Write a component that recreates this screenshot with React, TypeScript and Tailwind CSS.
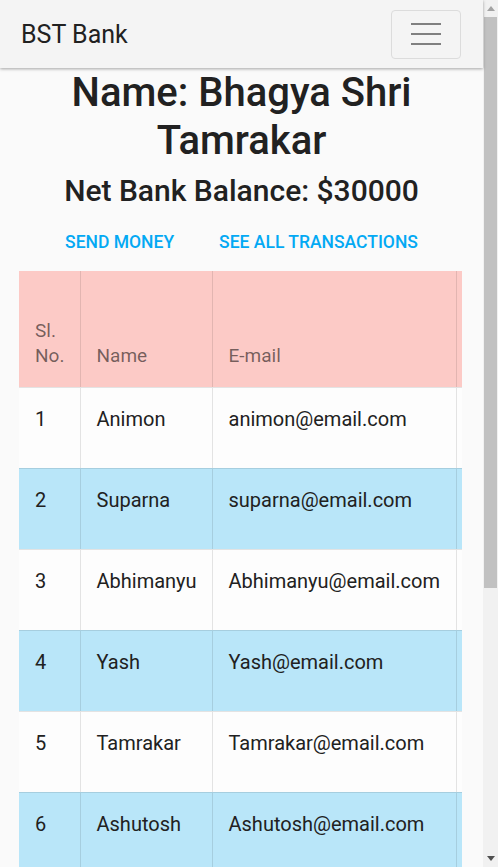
import React from 'react';

interface Customer {
  id: number;
  name: string;
  email: string;
  balance: number;
}

const customers: Customer[] = [
  { id: 1, name: "Animon", email: "animon@email.com", balance: 25000 },
  { id: 2, name: "Suparna", email: "suparna@email.com", balance: 18000 },
  { id: 3, name: "Abhimanyu", email: "Abhimanyu@email.com", balance: 42000 },
  { id: 4, name: "Yash", email: "Yash@email.com", balance: 15000 },
  { id: 5, name: "Tamrakar", email: "Tamrakar@email.com", balance: 27000 },
  { id: 6, name: "Ashutosh", email: "Ashutosh@email.com", balance: 33000 },
  { id: 7, name: "Rohit", email: "Rohit@email.com", balance: 21000 },
  { id: 8, name: "Priya", email: "Priya@email.com", balance: 12000 },
  { id: 9, name: "Karan", email: "Karan@email.com", balance: 38000 },
  { id: 10, name: "Neha", email: "Neha@email.com", balance: 29000 },
];

const App: React.FC = () => {
  return (
    <div className="h-screen flex overflow-hidden bg-[#fafafa] text-[#212121] font-['Roboto',sans-serif]">
      <div className="flex-1 min-w-0">
        {/* Navbar */}
        <nav className="h-[68px] bg-[#f4f4f4] shadow-[0_1px_3px_rgba(0,0,0,0.35)] flex items-center justify-between pl-[21px] pr-[22px] relative z-10">
          <span className="text-[25px] leading-none">BST Bank</span>
          <button className="w-[70px] h-[49px] border border-[#dcdcdc] rounded-[4px] flex flex-col items-center justify-center gap-[8px]">
            <span className="block w-[30px] h-[2px] bg-[#808080]" />
            <span className="block w-[30px] h-[2px] bg-[#808080]" />
            <span className="block w-[30px] h-[2px] bg-[#808080]" />
          </button>
        </nav>

        {/* Account summary */}
        <div className="text-center">
          <h1 className="text-[40px] leading-[48px] font-medium px-[40px] pt-px">Name: Bhagya Shri Tamrakar</h1>
          <h2 className="text-[30px] leading-[34px] font-medium mt-[9px]">Net Bank Balance: $30000</h2>
          <div className="flex justify-center gap-[45px] mt-[24px] text-[17.5px] font-medium text-[#03a9f4] uppercase leading-[20px]">
            <a href="#">Send Money</a>
            <a href="#">See all transactions</a>
          </div>
        </div>

        {/* Customers */}
        <div className="ml-[19px] mr-[21px] mt-[19px] mb-[36px] overflow-x-auto">
          <table className="border-collapse text-[20px] w-[660px] table-fixed">
            <colgroup>
              <col className="w-[61px]" />
              <col className="w-[132px]" />
              <col className="w-[244px]" />
              <col className="w-[223px]" />
            </colgroup>
            <thead>
              <tr className="bg-[#fccac6] text-black/55 text-[19px] h-[116px]">
                <th className="align-bottom text-left font-normal px-[16px] pb-[19px] leading-[25px] border-r border-black/10">Sl. No.</th>
                <th className="align-bottom text-left font-normal px-[16px] pb-[19px] leading-[25px] border-r border-black/10">Name</th>
                <th className="align-bottom text-left font-normal px-[16px] pb-[19px] leading-[25px] border-r border-black/10">E-mail</th>
                <th className="align-bottom text-left font-normal px-[16px] pb-[19px] leading-[25px]">Current Balance</th>
              </tr>
            </thead>
            <tbody>
              {customers.map((c, i) => (
                <tr key={c.id} className={`h-[81px] border-t border-black/10 ${i % 2 === 1 ? 'bg-[#b9e6f9]' : 'bg-[#fdfdfd]'}`}>
                  <td className="align-top px-[16px] pt-[17px] leading-[28px] border-r border-black/10">{c.id}</td>
                  <td className="align-top px-[16px] pt-[17px] leading-[28px] border-r border-black/10">{c.name}</td>
                  <td className="align-top px-[16px] pt-[17px] leading-[28px] border-r border-black/10">{c.email}</td>
                  <td className="align-top px-[16px] pt-[17px] leading-[28px]">${c.balance}</td>
                </tr>
              ))}
            </tbody>
          </table>
        </div>
      </div>

      {/* Window scrollbar */}
      <div className="w-[15px] shrink-0 bg-[#f1f1f1] flex flex-col items-stretch">
        <div className="h-[17px] flex items-center justify-center">
          <svg width="8" height="5" viewBox="0 0 8 5"><path d="M4 0L8 5H0Z" fill="#a3a3a3" /></svg>
        </div>
        <div className="h-[571px] mx-px bg-[#c1c1c1]" />
        <div className="flex-1" />
        <div className="h-[17px] flex items-center justify-center">
          <svg width="8" height="5" viewBox="0 0 8 5"><path d="M0 0H8L4 5Z" fill="#505050" /></svg>
        </div>
      </div>
    </div>
  );
};

export default App;
